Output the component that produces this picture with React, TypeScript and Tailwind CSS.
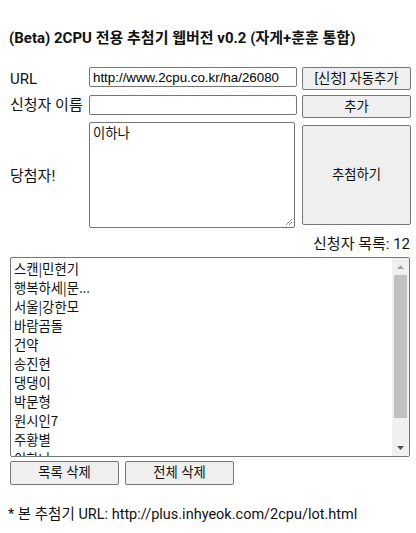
import * as React from "react"

const entrants = [
    "스캔|민현기",
    "행복하세|문...",
    "서울|강한모",
    "바람곰돌",
    "건약",
    "송진현",
    "댕댕이",
    "박문형",
    "원시인7",
    "주황별",
    "이하나",
]

const btn =
    "shrink-0 flex items-center justify-center bg-[#efefef] border border-[#767676] rounded-[2px] text-[13.33px] text-[#111] font-['Roboto','Noto_Sans_CJK_KR',sans-serif]"

export default function App() {
    return (
        <div className="w-[416px] h-[533px] bg-white text-[#111] pl-[8px] pr-[4px] pt-[28px] font-['Roboto','Noto_Sans_CJK_KR',sans-serif]">
            <h1 className="text-[15px] leading-[20px] font-bold pl-[1px]">
                (Beta) 2CPU 전용 추첨기 웹버전 v0.2 (자게+훈훈 통합)
            </h1>

            <div className="mt-[19px] pl-[2px] flex flex-col">
                {/* URL */}
                <div className="flex items-start h-[28px]">
                    <div className="shrink-0 w-[79px] h-[23px] flex items-center text-[15px] pt-[1px]">URL</div>
                    <input
                        readOnly
                        value="http://www.2cpu.co.kr/ha/26080"
                        className="shrink-0 w-[208px] h-[20px] border border-[#767676] rounded-[2px] px-[3px] text-[13.33px] text-black outline-none font-['Liberation_Sans',Arial,sans-serif]"
                    />
                    <button className={`${btn} ml-[5px] w-[109px] h-[23px]`}>[신청] 자동추가</button>
                </div>

                {/* 이름 */}
                <div className="flex items-start h-[27px]">
                    <div className="shrink-0 w-[79px] h-[20px] flex items-center text-[15px]">신청자 이름</div>
                    <input className="shrink-0 w-[208px] h-[20px] border border-[#767676] rounded-[2px] outline-none" />
                    <button className={`${btn} ml-[5px] w-[109px] h-[23px]`}>추가</button>
                </div>

                {/* 당첨자 */}
                <div className="flex items-center h-[106px]">
                    <div className="shrink-0 w-[79px] text-[15px] pt-[3px]">당첨자!</div>
                    <div className="shrink-0 relative w-[206px] h-[106px] border border-[#767676] rounded-[2px] px-[3px] pt-[1px] text-[13.33px] leading-[18px] font-['Noto_Sans_CJK_KR',sans-serif]">
                        이하나
                        <svg className="absolute right-[1px] bottom-[1px]" width="9" height="9" viewBox="0 0 9 9">
                            <path d="M8 2 L2 8 M8 5 L5 8" stroke="#888" strokeWidth="1" />
                        </svg>
                    </div>
                    <button className={`${btn} ml-[7px] w-[109px] h-[100px]`}>추첨하기</button>
                </div>
            </div>

            <div className="mt-[6px] pr-[2px] text-right text-[15px] leading-[20px]">신청자 목록: 12</div>

            <div className="mt-[3px] ml-[2px] w-[400px] h-[200px] border border-[#767676] rounded-[2px] flex overflow-hidden">
                <ul className="flex-1 h-[198px] pl-[3px] pt-[1px] text-[13.33px] leading-[19px] overflow-hidden font-['Noto_Sans_CJK_KR',sans-serif]">
                    {entrants.map((name) => (
                        <li key={name} className="whitespace-nowrap">{name}</li>
                    ))}
                </ul>
                <div className="w-[17px] bg-[#f0f0f0] flex flex-col items-center">
                    <div className="h-[17px] flex items-center justify-center">
                        <svg width="7" height="4" viewBox="0 0 7 4">
                            <path d="M0 4 L3.5 0 L7 4 Z" fill="#a3a3a3" />
                        </svg>
                    </div>
                    <div className="w-[13px] h-[143px] bg-[#c1c1c1]" />
                    <div className="flex-1" />
                    <div className="h-[17px] flex items-center justify-center">
                        <svg width="7" height="4" viewBox="0 0 7 4">
                            <path d="M0 0 L7 0 L3.5 4 Z" fill="#505050" />
                        </svg>
                    </div>
                </div>
            </div>

            <div className="mt-[4px] ml-[2px] flex gap-[6px]">
                <button className={`${btn} w-[109px] h-[24px]`}>목록 삭제</button>
                <button className={`${btn} w-[109px] h-[24px]`}>전체 삭제</button>
            </div>

            <p className="mt-[20px] text-[14.5px] leading-[20px]">
                * 본 추첨기 URL: http://plus.inhyeok.com/2cpu/lot.html
            </p>
        </div>
    )
}
